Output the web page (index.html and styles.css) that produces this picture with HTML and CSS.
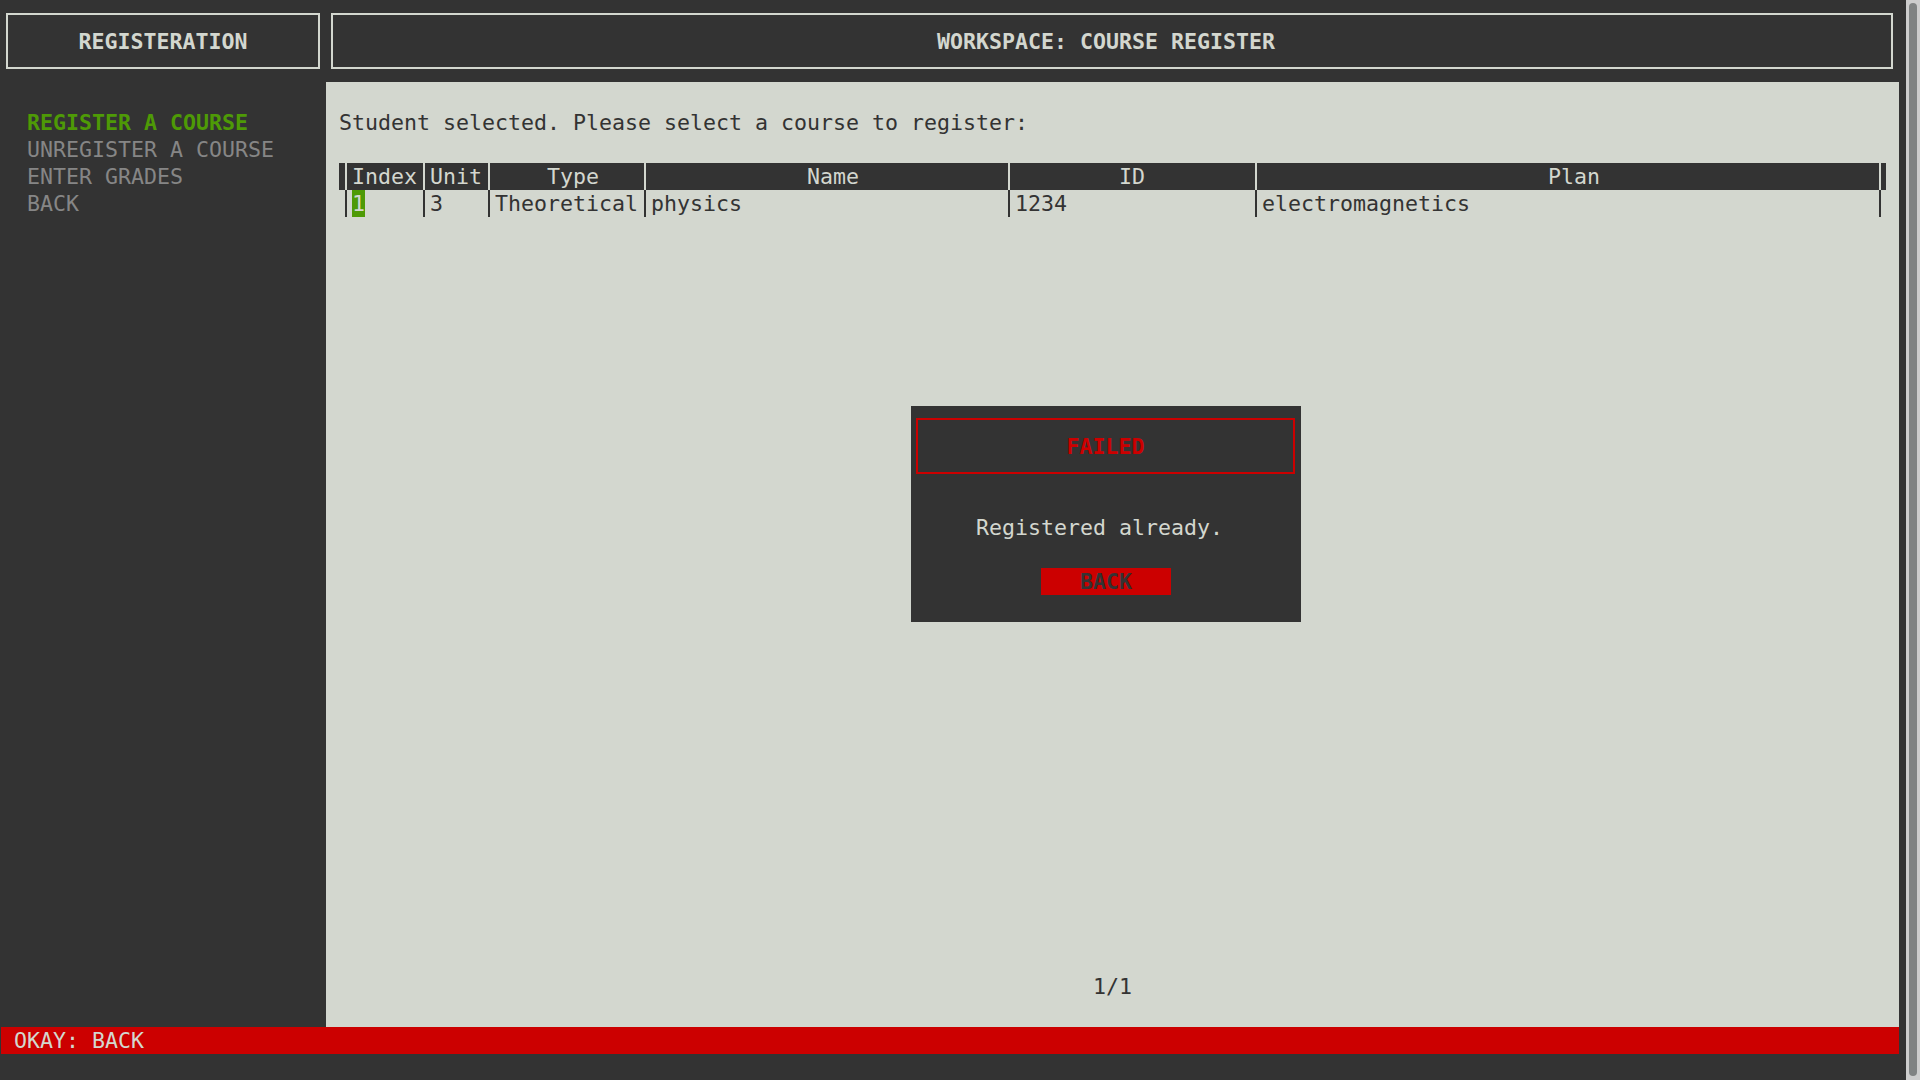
FILE: index.html
```html
<!DOCTYPE html>
<html lang="en">
<head>
<meta charset="utf-8">
<title>Registeration - Course Register</title>
<link rel="stylesheet" href="styles.css">
</head>
<body>
<div class="screen">
  <div class="term">
    <header class="titles">
      <div class="title-cell side"><div class="title-box">REGISTERATION</div></div>
      <div class="title-cell work"><div class="title-box shift">WORKSPACE: COURSE REGISTER</div></div>
    </header>
    <div class="main">
      <nav class="menu">
        <div class="item active">REGISTER A COURSE</div>
        <div class="item">UNREGISTER A COURSE</div>
        <div class="item">ENTER GRADES</div>
        <div class="item">BACK</div>
      </nav>
      <section class="panel">
        <p class="prompt">Student selected. Please select a course to register:</p>
        <div class="table">
          <div class="row head">
            <span class="sep"></span><span class="cell">Index</span>
            <span class="sep"></span><span class="cell">Unit</span>
            <span class="sep"></span><span class="cell">    Type</span>
            <span class="sep"></span><span class="cell">            Name</span>
            <span class="sep"></span><span class="cell">        ID</span>
            <span class="sep"></span><span class="cell">                      Plan</span>
            <span class="sep"></span>
          </div>
          <div class="row">
            <span class="sep"></span><span class="cell"><span class="cursor">1</span></span>
            <span class="sep"></span><span class="cell">3</span>
            <span class="sep"></span><span class="cell">Theoretical</span>
            <span class="sep"></span><span class="cell">physics</span>
            <span class="sep"></span><span class="cell">1234</span>
            <span class="sep"></span><span class="cell">electromagnetics</span>
            <span class="sep"></span>
          </div>
        </div>
        <div class="pager">1/1</div>
        <div class="dialog">
          <div class="dialog-title">FAILED</div>
          <div class="dialog-msg">Registered already.</div>
          <div class="dialog-btn">BACK</div>
        </div>
      </section>
    </div>
    <div class="status">OKAY: BACK</div>
  </div>
  <div class="scrollbar"><div class="thumb"></div></div>
</div>
</body>
</html>
```
FILE: styles.css
```css
html, body {
  margin: 0;
  padding: 0;
}
body {
  background: #333333;
  color: #d3d7cf;
  font-family: "DejaVu Sans Mono", "Liberation Mono", monospace;
  font-size: 21.6px;
  line-height: 27px;
  overflow: hidden;
}
.screen {
  display: flex;
  width: 1920px;
  height: 1080px;
}
.term {
  width: 1906px;
  height: 1080px;
  padding: 1px 0 0 1px;
  box-sizing: border-box;
  display: flex;
  flex-direction: column;
}
.titles {
  display: flex;
  width: 1898px;
  height: 81px;
}
.title-cell {
  display: flex;
  box-sizing: border-box;
}
.title-cell.side { width: 325px; }
.title-cell.work { width: 1573px; }
.title-box {
  flex: 1;
  margin: 12px 6px 13px 5px;
  border: 2px solid #d3d7cf;
  display: flex;
  align-items: center;
  justify-content: center;
  font-weight: bold;
  color: #d3d7cf;
  white-space: pre;
}
.title-box.shift { padding-right: 12px; }

.main {
  display: flex;
  width: 1898px;
  height: 945px;
}
.menu {
  width: 325px;
  padding: 27px 0 0 26px;
  box-sizing: border-box;
}
.item {
  height: 27px;
  color: #868686;
  white-space: pre;
}
.item.active {
  color: #4e9a06;
  font-weight: bold;
}
.panel {
  position: relative;
  width: 1573px;
  background: #d3d7cf;
  color: #333333;
  display: flex;
  flex-direction: column;
  padding: 27px 0 27px 13px;
  box-sizing: border-box;
}
.prompt {
  margin: 0 0 27px;
  height: 27px;
  white-space: pre;
}
.table {
  width: 1547px;
}
.row {
  display: grid;
  grid-template-columns: 13px 65px 13px 52px 13px 143px 13px 351px 13px 234px 13px 611px 13px;
  height: 27px;
  color: #333333;
}
.row.head {
  background: #333333;
  color: #d3d7cf;
}
.cell {
  white-space: pre;
  overflow: hidden;
}
.sep {
  display: flex;
  justify-content: center;
}
.sep::before {
  content: "";
  width: 2px;
  background: currentColor;
}
.cursor {
  display: inline-block;
  width: 13px;
  background: #4e9a06;
  color: #d3d7cf;
}
.pager {
  margin: auto 0 0 -13px;
  height: 27px;
  text-align: center;
  color: #333333;
}
.dialog {
  position: absolute;
  left: 585px;
  top: 324px;
  width: 390px;
  height: 216px;
  background: #333333;
  color: #d3d7cf;
  display: flex;
  flex-direction: column;
}
.dialog-title {
  margin: 12px 6px 0 5px;
  height: 56px;
  box-sizing: border-box;
  border: 2px solid #cc0000;
  color: #cc0000;
  font-weight: bold;
  display: flex;
  align-items: center;
  justify-content: center;
}
.dialog-msg {
  margin-top: 40px;
  height: 27px;
  padding-right: 13px;
  text-align: center;
  white-space: pre;
}
.dialog-btn {
  margin: 27px auto 0;
  width: 130px;
  height: 27px;
  background: #cc0000;
  color: #333333;
  font-weight: bold;
  text-align: center;
}
.status {
  width: 1898px;
  height: 27px;
  background: #cc0000;
  color: #d3d7cf;
  padding-left: 13px;
  box-sizing: border-box;
  white-space: pre;
}
.scrollbar {
  width: 14px;
  height: 1080px;
  background: #cdcdcd;
  padding: 3px 3px 4px;
  box-sizing: border-box;
}
.thumb {
  height: 100%;
  background: #808383;
  border-radius: 4px;
}
```
